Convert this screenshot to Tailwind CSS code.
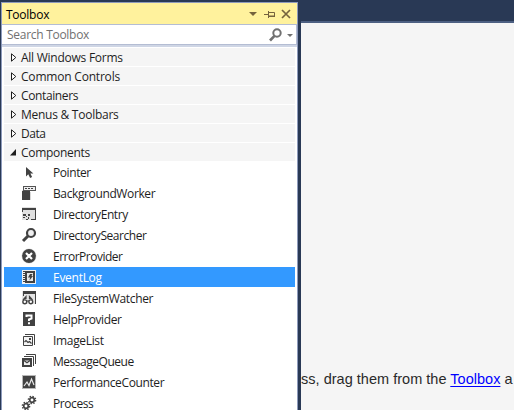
<!DOCTYPE html>
<html lang="en">
<head>
<meta charset="utf-8">
<title>Toolbox</title>
<script src="https://cdn.jsdelivr.net/npm/@tailwindcss/browser@4"></script>
</head>
<body class="w-[514px] h-[410px] overflow-hidden bg-[#293955] font-['Open_Sans','Noto_Sans',sans-serif] text-[12px] text-[#1e1e1e]">
<div class="flex w-[514px] h-[410px] overflow-hidden">
  <aside class="shrink-0 w-[301px] h-[410px] pl-px pt-[2px] pr-[3px] bg-[#293955]">
    <div class="h-[408px] border-t border-x border-[#8e9bbc] bg-white flex flex-col overflow-hidden">
      <header class="shrink-0 h-[21px] bg-[#fff29d] flex items-center pl-[4px] pr-[6px] text-black">
        <span class="grow leading-[21px] pt-px tracking-[-0.25px]">Toolbox</span>
        <svg class="mr-[7px]" width="8" height="16" viewBox="0 0 8 16"><path d="M0 6h8L4 10z" fill="#75633d"/></svg>
        <svg class="mr-[6px]" width="11" height="16" viewBox="0 0 11 16" fill="none" stroke="#75633d"><path d="M0 8.500h4M4.500 5v7M5 6.500h5.500v4M5 10h6" /><path d="M5 10.500h6"/></svg>
        <svg width="10" height="16" viewBox="0 0 10 16"><path d="M1 4l8 8M9 4l-8 8" stroke="#75633d" stroke-width="1.700"/></svg>
      </header>
      <div class="shrink-0 h-[21px] border-y border-r border-[#b4bdd3] bg-white flex items-center pl-[5px] pr-[3px] text-[#717171]">
        <span class="grow leading-[18px] tracking-[-0.28px]">Search Toolbox</span>
        <svg class="mr-[5px]" width="13" height="14" viewBox="0 0 13 14" fill="none" stroke="#717171"><circle cx="8" cy="5" r="3.700" stroke-width="2"/><path d="M5.500 7.800L1 12.500" stroke-width="2.600"/></svg>
        <svg width="6" height="12" viewBox="0 0 6 12"><path d="M0 5h6L3 8z" fill="#717171"/></svg>
      </div>
      <div class="shrink-0 h-[2px] bg-[#cfd6e5]"></div>
      <div class="pt-px pl-[2px] pr-[2px]">
        <div class="flex flex-col gap-px">
          <div class="h-[18px] bg-[#f5f5f5] flex items-center pl-[7px] gap-[4px]"><svg class="mt-px" width="6" height="9" viewBox="0 0 6 9"><path d="M.5 .8v7.400L4.800 4.500z" fill="#fff" stroke="#1e1e1e"/></svg><span class="leading-[17px] pt-px tracking-[-0.25px]">All Windows Forms</span></div>
          <div class="h-[18px] bg-[#f5f5f5] flex items-center pl-[7px] gap-[4px]"><svg class="mt-px" width="6" height="9" viewBox="0 0 6 9"><path d="M.5 .8v7.400L4.800 4.500z" fill="#fff" stroke="#1e1e1e"/></svg><span class="leading-[17px] pt-px tracking-[-0.2px]">Common Controls</span></div>
          <div class="h-[18px] bg-[#f5f5f5] flex items-center pl-[7px] gap-[4px]"><svg class="mt-px" width="6" height="9" viewBox="0 0 6 9"><path d="M.5 .8v7.400L4.800 4.500z" fill="#fff" stroke="#1e1e1e"/></svg><span class="leading-[17px] pt-px tracking-[-0.38px]">Containers</span></div>
          <div class="h-[18px] bg-[#f5f5f5] flex items-center pl-[7px] gap-[4px]"><svg class="mt-px" width="6" height="9" viewBox="0 0 6 9"><path d="M.5 .8v7.400L4.800 4.500z" fill="#fff" stroke="#1e1e1e"/></svg><span class="leading-[17px] pt-px tracking-[-0.26px]">Menus &amp; Toolbars</span></div>
          <div class="h-[18px] bg-[#f5f5f5] flex items-center pl-[7px] gap-[4px]"><svg class="mt-px" width="6" height="9" viewBox="0 0 6 9"><path d="M.5 .8v7.400L4.800 4.500z" fill="#fff" stroke="#1e1e1e"/></svg><span class="leading-[17px] pt-px tracking-[-0.5px]">Data</span></div>
          <div class="h-[18px] bg-[#f5f5f5] flex items-center pl-[6px] gap-[5px]"><svg class="mt-px" width="6" height="7" viewBox="0 0 6 7"><path d="M6 0v6.500H0z" fill="#1e1e1e"/></svg><span class="leading-[17px] pt-px tracking-[-0.3px]">Components</span></div>
        </div>
        <div class="pt-px flex flex-col gap-px">
          <div class="h-[20px] flex items-center pl-[17px] gap-[16px]"><svg width="16" height="16" viewBox="0 0 16 16"><path d="M5 3v9.500l2.300-2.200 1.800 3.700 2-1-1.700-3.500h3z" fill="#424242"/></svg><span class="leading-[19px] pt-px tracking-[-0.42px]">Pointer</span></div>
          <div class="h-[20px] flex items-center pl-[17px] gap-[16px]"><svg width="16" height="16" viewBox="0 0 16 16" shape-rendering="crispEdges"><path d="M1 6h8v9H1z" fill="#424242"/><path d="M1 5h2v1H1zM9 7h1v8H9z" fill="#d8d8d8"/><path d="M2 1h13v5H2z" fill="#555"/><path d="M3 2h11v3H3z" fill="#efeff0"/><path d="M4 3h2v1H4zM7 3h2v1H7zM10 3h2v1h-2z" fill="#424242"/></svg><span class="leading-[19px] pt-px tracking-[-0.38px]">BackgroundWorker</span></div>
          <div class="h-[20px] flex items-center pl-[17px] gap-[16px]"><svg width="16" height="16" viewBox="0 0 16 16"><path d="M1 1h14v13H1z" fill="#e0e0e0"/><path d="M1 2h14v2H1zM14 3h1v11h-1zM10 13h5v1h-5zM1 3h1v3H1z" fill="#424242"/><path d="M2 8h3v2H2zM7 8h2v2H7zM2 11h2v1H2zM5 10h1v1H5zM5 13h2v1H5zM7 11h1v2H7z" fill="#424242"/></svg><span class="leading-[19px] pt-px tracking-[-0.43px]">DirectoryEntry</span></div>
          <div class="h-[20px] flex items-center pl-[17px] gap-[16px]"><svg width="16" height="16" viewBox="0 0 16 16" fill="none"><circle cx="10" cy="6" r="4" stroke="#424242" stroke-width="2.200" fill="#efeff0"/><path d="M7 9l-5 5" stroke="#424242" stroke-width="3"/></svg><span class="leading-[19px] pt-px tracking-[-0.46px]">DirectorySearcher</span></div>
          <div class="h-[20px] flex items-center pl-[17px] gap-[16px]"><svg width="16" height="16" viewBox="0 0 16 16"><circle cx="8" cy="8" r="7.500" fill="#ddd"/><circle cx="8" cy="8" r="6.900" fill="#424242"/><path d="M5 5l6 6M11 5l-6 6" stroke="#fff" stroke-width="2.200"/></svg><span class="leading-[19px] pt-px tracking-[-0.5px]">ErrorProvider</span></div>
          <div class="h-[20px] flex items-center pl-[17px] gap-[16px] bg-[#3399ff] text-white"><svg width="16" height="16" viewBox="0 0 16 16"><path d="M1 1h14v14H1z" fill="#efeff0"/><path d="M4 2h10v12H4z" fill="#424242"/><path d="M6 4h6v8H6z" fill="#e8e8e8"/><path d="M2 2h2v1H2zM2 4h2v1H2zM2 6h2v1H2zM2 8h2v1H2zM2 10h2v1H2zM2 12h2v1H2zM9 5h2.500l-1 2H12l-3.500 4.500.6-3H7z" fill="#424242"/></svg><span class="leading-[19px] pt-px tracking-[-0.28px]">EventLog</span></div>
          <div class="h-[20px] flex items-center pl-[17px] gap-[16px]"><svg width="16" height="16" viewBox="0 0 16 16"><path d="M1 1h14v13H1z" fill="#e4e4e4"/><path d="M2 1h13v3H2zM14 3h1v11h-1zM2 3h1v3H2z" fill="#424242"/><path d="M2 10l3-3.500V9M11.500 10l-3-3.500V9M6 11h2" fill="none" stroke="#424242" stroke-width="1.200"/><g fill="#fff" stroke="#424242" stroke-width="1.400"><circle cx="3.800" cy="11.800" r="1.900"/><circle cx="9.800" cy="11.800" r="1.900"/></g></svg><span class="leading-[19px] pt-px tracking-[-0.36px]">FileSystemWatcher</span></div>
          <div class="h-[20px] flex items-center pl-[17px] gap-[16px]"><svg width="16" height="16" viewBox="0 0 16 16"><path d="M2 1h12v14H2z" fill="#424242"/><path d="M5.500 6V4.500h5v3L8 8.500V10" fill="none" stroke="#fff" stroke-width="2"/><path d="M7 11.200h2v2H7z" fill="#fff"/></svg><span class="leading-[19px] pt-px tracking-[-0.4px]">HelpProvider</span></div>
          <div class="h-[20px] flex items-center pl-[17px] gap-[16px]"><svg width="16" height="16" viewBox="0 0 16 16" fill="none" stroke="#424242"><path d="M4 2.500h9.500V13"/><path d="M2.500 4.500h9v9h-9z" fill="#f5f5f5"/><path d="M3.500 10l1.500-1.500 2 2 1.500-1 2 2" stroke-width="1.200"/><path d="M8 6h2v2H8z" fill="#424242" stroke="none"/></svg><span class="leading-[19px] pt-px tracking-[-0.33px]">ImageList</span></div>
          <div class="h-[20px] flex items-center pl-[17px] gap-[16px]"><svg width="16" height="16" viewBox="0 0 16 16" fill="none" stroke="#424242"><path d="M5 1.500h9.500V11M3 3.500h9.500V13"/><path d="M1 5h10v9H1z" fill="#424242" stroke="none"/><path d="M3 7.500h6v4.500H3z" fill="#f0f0f0" stroke="none"/><path d="M3 7.500l3 2.300 3-2.300" stroke-width="1.300"/></svg><span class="leading-[19px] pt-px tracking-[-0.48px]">MessageQueue</span></div>
          <div class="h-[20px] flex items-center pl-[17px] gap-[16px]"><svg width="16" height="16" viewBox="0 0 16 16"><path d="M1 1h14v14H1z" fill="#b8b8b8"/><path d="M2 2h12v12H2z" fill="#424242"/><path d="M3 12l3-4 2 3.500L10.500 5l2.500 6" fill="none" stroke="#e8e8e8" stroke-width="1.200"/></svg><span class="leading-[19px] pt-px tracking-[-0.38px]">PerformanceCounter</span></div>
          <div class="h-[20px] flex items-center pl-[17px] gap-[16px]"><svg width="16" height="16" viewBox="0 0 16 16" fill="none" stroke="#424242"><circle cx="11" cy="5" r="2.300" stroke-width="1.700"/><circle cx="11" cy="5" r="3.700" stroke-width="1.300" stroke-dasharray="1.450 1.450"/><circle cx="5" cy="11" r="2.300" stroke-width="1.700"/><circle cx="5" cy="11" r="3.700" stroke-width="1.300" stroke-dasharray="1.450 1.450"/></svg><span class="leading-[19px] pt-px tracking-[-0.42px]">Process</span></div>
        </div>
      </div>
    </div>
  </aside>
  <main class="grow w-0 flex flex-col overflow-hidden">
    <div class="shrink-0 h-[23px] bg-[#293955] border-b-2 border-[#4d6082]"></div>
    <div class="grow bg-[#f5f5f5] flex flex-col justify-end pb-[20px] overflow-hidden">
      <p class="whitespace-nowrap font-['Liberation_Sans',Arial,sans-serif] text-[14.500px] leading-[22px] tracking-[0.02px] text-[#2a2a2a]">ss, drag them from the <a class="text-[#0000ff] underline decoration-1 underline-offset-2">Toolbox</a> a</p>
    </div>
  </main>
</div>
</body>
</html>
